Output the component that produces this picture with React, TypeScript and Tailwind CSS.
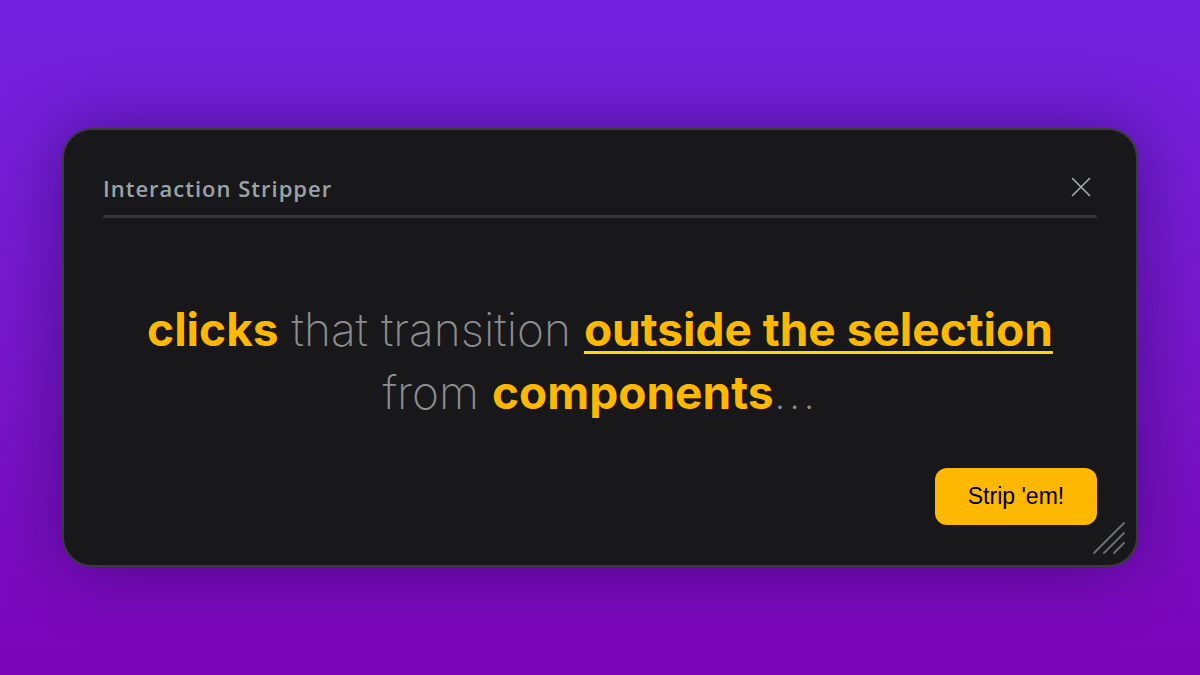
import {X} from "lucide-react";

const ResizeGrip = () => (
  <svg width="34" height="34" viewBox="0 0 34 34" className="absolute right-[10px] bottom-[10px]">
    <g stroke="#6b6e70" strokeWidth="2" strokeLinecap="round">
      <line x1="2" y1="32" x2="32" y2="2" />
      <line x1="12" y1="32" x2="32" y2="12" />
      <line x1="22" y1="32" x2="32" y2="22" />
    </g>
  </svg>
);

export default function App() {
  return (
    <div className="w-[1200px] h-[675px] flex items-center justify-center bg-gradient-to-b from-[#7322e0] to-[#7b04b8]">
      <div className="relative w-[1076px] h-[439px] mt-[19px] rounded-[30px] border-2 border-[#3a3b3c] bg-[#18181a] shadow-[0_0_70px_rgba(20,0,60,0.45)] px-[39px] pt-[45px] pb-[40px] flex flex-col">
        <div className="flex items-center justify-between h-[28px]">
          <span className="text-[22px] font-semibold text-[#9aa4a7] tracking-[1px]" style={{fontFamily: '"Open Sans", Inter, sans-serif'}}>
            Interaction Stripper
          </span>
          <X size={34} strokeWidth={1.15} className="text-[#a3abad] -mr-[1px] -mt-[4px]" />
        </div>
        <div className="mt-[12px] h-[3px] bg-[#35383a] rounded-full" />

        <p
          className="mt-[80px] text-center text-[46px] leading-[63px]"
          style={{fontFamily: 'Inter, "Noto Sans", sans-serif'}}
        >
          <span className="font-bold text-[#ffb800]">clicks</span>{" "}
          <span className="font-extralight text-[#8d8d8f]">that transition</span>{" "}
          <span className="font-bold text-[#ffb800] underline decoration-[#ffd60a] decoration-[3px] underline-offset-[5px]">
            outside the selection
          </span>
          <br />
          <span className="font-extralight text-[#8d8d8f]">from</span>{" "}
          <span className="font-bold text-[#ffb800]">components</span>
          <span className="font-extralight text-[#8d8d8f] tracking-[2px]">...</span>
        </p>

        <div className="mt-auto flex justify-end">
          <button
            type="button"
            className="w-[162px] h-[57px] rounded-[12px] bg-[#ffb800] text-black text-[23px]"
            style={{fontFamily: '"Liberation Sans", Arial, sans-serif'}}
          >
            Strip 'em!
          </button>
        </div>
        <ResizeGrip />
      </div>
    </div>
  );
}
